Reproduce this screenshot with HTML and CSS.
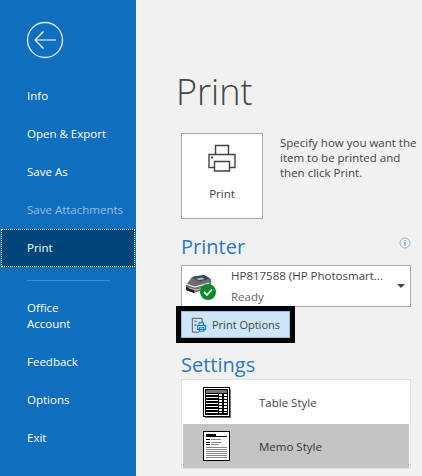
FILE: index.html
```html
<!DOCTYPE html>
<html lang="en">
<head>
<meta charset="utf-8">
<title>Print</title>
<link rel="stylesheet" href="styles.css">
</head>
<body>
<div class="app">
  <nav class="side">
    <div class="back">
      <svg width="38" height="38" viewBox="0 0 38 38"><circle cx="19" cy="19" r="17.5" fill="none" stroke="#d5e5f4" stroke-width="1.4"/><path d="M30 19H9M17.5 10.5 9 19l8.500 8.500" fill="none" stroke="#fff" stroke-width="1.200"/></svg>
    </div>
    <a class="item">Info</a>
    <a class="item">Open &amp; Export</a>
    <a class="item">Save As</a>
    <a class="item off">Save Attachments</a>
    <a class="item cur">Print</a>
    <div class="rule"></div>
    <a class="item two">Office<br>Account</a>
    <a class="item">Feedback</a>
    <a class="item">Options</a>
    <a class="item">Exit</a>
  </nav>
  <main class="main">
    <h1 class="title">Print</h1>
    <div class="action">
      <button class="pbtn">
        <svg width="30" height="30" viewBox="0 0 30 30"><path d="M8.500 1.500h13v9h-13zM2 10.500h26v13H2z" fill="#fafafa" stroke="#444" stroke-width="1.400"/><path d="M8.500 17.500h15v9.500h-15z" transform="translate(-1 0)" fill="#fafafa" stroke="#444" stroke-width="1.400"/><rect x="4" y="12.500" width="2" height="2" fill="#444"/></svg>
        <span>Print</span>
      </button>
      <p class="desc">Specify how you want the item to be printed and then click Print.</p>
    </div>
    <div class="head-row">
      <h2 class="sec">Printer</h2>
      <svg class="info" width="12" height="12" viewBox="0 0 12 12"><circle cx="6" cy="6" r="5" fill="none" stroke="#8fb8dc"/><path d="M6 5v3.500M6 3v1.100" stroke="#5f7f9c" stroke-width="1.100"/></svg>
    </div>
    <div class="drop">
      <svg class="pr-ico" width="31" height="30" viewBox="0 0 31 30">
        <path d="M0 14 6 6l12-2 7 4v8L8 22l-8-3z" fill="#6d6d6d"/>
        <path d="M6 6l12-2 6 3.500-11 3z" fill="#39474a"/>
        <path d="M10 7.500l6-1 3 1.500-6 1.200z" fill="#8fc3d6"/>
        <path d="M0 16l8 3v3l-8-3z" fill="#1f1f1f"/>
        <path d="M0 13l9 3 14-4" fill="none" stroke="#e8e8e8" stroke-width="1.300"/>
        <path d="M3 17l7 2 12-3" fill="none" stroke="#c9c9c9"/>
        <circle cx="22" cy="21" r="8" fill="#0a8a2e"/>
        <path d="M18 21l3 3 5-5.500" fill="none" stroke="#fff" stroke-width="1.800"/>
      </svg>
      <div class="pr-text">
        <div class="pr-name">HP817588 (HP Photosmart...</div>
        <div class="pr-state">Ready</div>
      </div>
      <span class="caret"></span>
    </div>
    <div class="focus">
      <button class="opt">
        <svg width="16" height="16" viewBox="0 0 18 18"><path d="M9 17H1.500V1.500h11V7" fill="none" stroke="#555" stroke-width="1.100"/><path d="M4 4h2v2H4zM4 8h2v2H4zM4 12h1v1H4z" fill="#777"/><path d="M9 6.500h5v3H9zM7.500 9.500h9v4.500h-9zM9.500 12h5v4h-5z" fill="#cfe6f7" stroke="#0f76c8" stroke-width="1.200"/></svg>
        <span>Print Options</span>
      </button>
    </div>
    <h2 class="sec settings">Settings</h2>
    <div class="list">
      <div class="row">
        <svg class="thumb" width="28" height="31" viewBox="0 0 28 31"><rect x="2" y="2" width="26" height="29" fill="#777"/><rect x=".5" y=".5" width="26" height="29" fill="#fff" stroke="#000"/><rect x="2" y="2" width="23" height="26" fill="#000"/><rect x="3" y="3" width="21" height="3" fill="#777"/><g fill="#fff"><rect x="3" y="7" width="12" height="1"/><rect x="3" y="10" width="12" height="1"/><rect x="3" y="13" width="12" height="1"/><rect x="3" y="16" width="12" height="1"/><rect x="3" y="19" width="12" height="1"/><rect x="3" y="22" width="12" height="1"/><rect x="3" y="25" width="12" height="1"/><rect x="16" y="7" width="3" height="19"/><rect x="21" y="7" width="3" height="19"/></g><g fill="#000"><rect x="16" y="9" width="8" height="1"/><rect x="16" y="12" width="8" height="1"/><rect x="16" y="15" width="8" height="1"/><rect x="16" y="18" width="8" height="1"/><rect x="16" y="21" width="8" height="1"/><rect x="16" y="24" width="8" height="1"/></g></svg>
        <span>Table Style</span>
      </div>
      <div class="row sel">
        <svg class="thumb" width="28" height="31" viewBox="0 0 28 31"><rect x=".5" y=".5" width="26" height="29" fill="#fff" stroke="#000"/><rect x="3" y="3" width="10" height="2" fill="#000"/><rect x="3" y="5" width="21" height="1" fill="#000"/><rect x="3" y="8" width="4" height="1" fill="#000"/><rect x="3" y="11" width="4" height="1" fill="#000"/><rect x="3" y="13" width="4" height="1" fill="#000"/><rect x="8" y="8" width="10" height="1" fill="#888"/><rect x="8" y="11" width="10" height="1" fill="#888"/><rect x="8" y="13" width="8" height="1" fill="#888"/><g fill="#888"><rect x="3" y="16" width="21" height="1"/><rect x="3" y="18" width="21" height="1"/><rect x="3" y="20" width="21" height="1"/><rect x="3" y="22" width="21" height="1"/><rect x="3" y="24" width="21" height="1"/><rect x="3" y="26" width="21" height="1"/></g></svg>
        <span>Memo Style</span>
      </div>
    </div>
  </main>
</div>
</body>
</html>
```
FILE: styles.css
```css
* { box-sizing: border-box; }
html, body { margin: 0; padding: 0; }
body { width: 422px; height: 476px; overflow: hidden; font-family: "Open Sans", "Liberation Sans", sans-serif; font-size: 11.5px; }
.app { display: flex; height: 476px; background: #f1f1f1; }
.side { width: 136px; flex: none; background: #106ebe; color: #fff; padding-top: 21px; }
.back { height: 38px; margin-left: 26px; margin-bottom: 18px; }
.back svg { display: block; }
.item { display: flex; align-items: center; height: 38px; padding-left: 27px; font-size: 11.5px; line-height: 16px; color: #fff; }
.item.off { color: #9cbfdf; }
.item.cur { height: 38px; margin: 0 1px 0 1px; padding-left: 25px; background: #004578; border: 1px dotted #fff; }
.rule { height: 1px; margin: 13px 26px 8px 27px; background: #3a8fd6; }
.item.two { height: 54px; }
.main { flex: 1; padding-left: 45px; color: #444; }
.title { margin: 67px 0 0 -5px; font-size: 36px; line-height: 50px; font-weight: 300; color: #444; }
.action { display: flex; margin-top: 16px; }
.pbtn { width: 82px; height: 86px; padding: 10px 0 0; background: #fff; border: 1px solid #ababab; display: flex; flex-direction: column; align-items: center; font: inherit; color: #444; }
.pbtn span { margin-top: 12px; font-size: 11.500px; }
.pbtn svg { display: block; }
.desc { width: 146px; margin: 2px 0 0 17px; font-size: 11.500px; line-height: 15px; color: #444; }
.head-row { display: flex; justify-content: space-between; align-items: flex-start; width: 230px; margin-top: 14px; }
.sec { margin: 0; font-size: 20px; line-height: 28px; font-weight: 400; color: #2b79c2; }
.info { margin: 4px 0 0; }
.drop { display: flex; align-items: center; width: 230px; height: 42px; margin-top: 4px; padding-left: 4px; background: #fff; border: 1px solid #ababab; }
.pr-ico { flex: none; }
.pr-text { flex: 1; margin-left: 14px; line-height: 20px; }
.pr-name { font-size: 11.500px; color: #444; white-space: nowrap; }
.pr-state { margin-top: 1px; font-size: 11.500px; color: #666; }
.caret { margin-right: 5px; width: 0; height: 0; border: 4px solid transparent; border-top: 4px solid #444; border-bottom: 0; }
.focus { position: relative; width: 119px; height: 37px; margin: -1px 0 0 -5px; border: 5px solid #000; }
.opt { display: flex; align-items: center; width: 100%; height: 100%; padding: 0 0 0 9px; background: #cde6f7; border: 1px solid #92c0e0; font: inherit; color: #444; }
.opt span { margin-left: 5px; font-size: 11px; }
.settings { margin-top: 8px; }
.list { width: 230px; height: 90px; margin-top: 0; padding: 0 1px; background: #fff; border: 1px solid #e1e1e1; }
.row { display: flex; align-items: center; height: 44px; padding-left: 20px; font-size: 11.500px; color: #444; }
.row.sel { background: #c4c4c4; color: #333; }
.thumb { flex: none; margin-right: 28px; }
```
